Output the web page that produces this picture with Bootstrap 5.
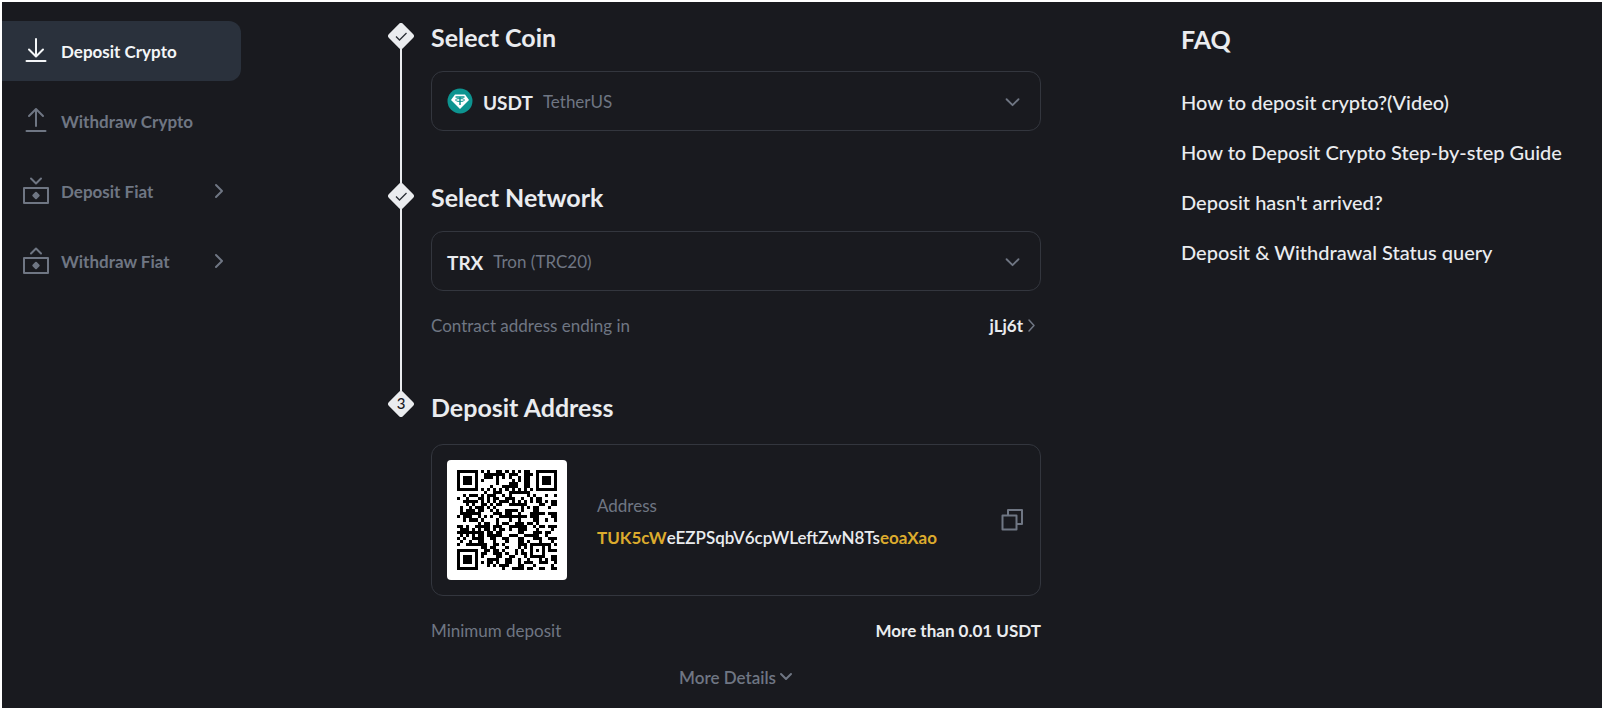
<!DOCTYPE html>
<html lang="en">
<head>
<meta charset="utf-8">
<meta name="viewport" content="width=device-width, initial-scale=1">
<title>Deposit Crypto</title>
<link href="https://cdn.jsdelivr.net/npm/bootstrap@5.3.0/dist/css/bootstrap.min.css" rel="stylesheet">
<style>
  :root { --ink: #eaecef; --muted: #6f7683; --edge: #33363e; --gold: #dcab2d; }
  body { background: #fff; padding: 2px; color: var(--ink); font: 400 17px/24px Lato, "Liberation Sans", sans-serif; }
  a { color: inherit; text-decoration: none; }
  button { color: inherit; }
  svg { display: block; flex: none; }
  .stroke { fill: none; stroke: currentColor; stroke-width: 2; stroke-linecap: round; stroke-linejoin: round; }
  .page { display: grid; grid-template-columns: 239px minmax(0, 1fr) 421px; min-height: calc(100vh - 4px); background: #191a1f; }
  .side { padding-top: 19px; gap: 10px; }
  .side a { height: 60px; padding: 0 16px 0 20px; gap: 11px; color: var(--muted); font-weight: 700; border-radius: 0 12px 12px 0; }
  .side a.current { background: #2a313c; color: #f4f6f8; }
  .side span, .picker .dim { padding-top: 2px; }
  .flow { padding: 21px 140px 0 147px; }
  .step { gap: 17px; }
  .marker { width: 26px; }
  .rail { width: 2px; background: var(--ink); }
  .step h2, .faq h2 { font-size: 25px; line-height: 28px; font-weight: 700; margin: 0 0 20px; }
  .step-coin { padding-bottom: 52px; }
  .step-net { padding-bottom: 53px; }
  .step-addr { padding-top: 2px; }
  .step-addr h2 { margin-bottom: 23px; }
  .picker { height: 60px; padding: 0 15px; border: 1px solid var(--edge); border-radius: 12px; background: none; }
  .ticker { font-size: 19px; font-weight: 700; padding-top: 4px; margin-right: 10px; }
  .coin-icon { margin-right: 10px; }
  .dim { color: var(--muted); }
  .info { margin-top: 23px; }
  .strong-text { font-weight: 700; }
  .addr-box { padding: 15px; border: 1px solid var(--edge); border-radius: 12px; }
  .qr { width: 120px; height: 120px; padding: 10px; background: #fff; border-radius: 4px; margin-right: 30px; }
  .addr-text { padding-top: 3px; }
  .addr { font-weight: 600; margin-top: 8px; overflow-wrap: anywhere; }
  .addr b { color: var(--gold); font-weight: 700; }
  .more { font-weight: 600; gap: 3px; }
  .faq { padding: 23px 20px 0 0; }
  .faq h2 { margin-bottom: 37px; }
  .faq ul { gap: 26px; font-size: 20px; font-weight: 500; }
</style>
</head>
<body>
<div class="page">
  <nav class="side d-flex flex-column" aria-label="Wallet">
    <a href="#" class="current d-flex align-items-center" aria-current="page">
      <svg class="stroke" width="28" height="28" viewBox="0 0 28 28"><path d="M14 2v17M7 12.500l7 7 7-7M4.500 24h19"/></svg>
      <span>Deposit Crypto</span></a>
    <a href="#" class="d-flex align-items-center">
      <svg class="stroke" width="28" height="28" viewBox="0 0 28 28"><path d="M14 19V2.500M7 9l7-7 7 7M4.500 24h19"/></svg>
      <span>Withdraw Crypto</span></a>
    <a href="#" class="d-flex align-items-center">
      <svg class="stroke" width="28" height="28" viewBox="0 0 28 28"><path d="M9 1.500l5 5 5-5M2 11h24v15H2z"/><path fill="currentColor" d="M14 15.800l2.700 2.700-2.700 2.700-2.700-2.700z"/></svg>
      <span class="flex-grow-1">Deposit Fiat</span>
      <svg class="stroke" width="14" height="16" viewBox="0 0 14 16"><path d="M5 2l6 6-6 6"/></svg></a>
    <a href="#" class="d-flex align-items-center">
      <svg class="stroke" width="28" height="28" viewBox="0 0 28 28"><path d="M9 6.500l5-5 5 5M2 11h24v15H2z"/><path fill="currentColor" d="M14 15.800l2.700 2.700-2.700 2.700-2.700-2.700z"/></svg>
      <span class="flex-grow-1">Withdraw Fiat</span>
      <svg class="stroke" width="14" height="16" viewBox="0 0 14 16"><path d="M5 2l6 6-6 6"/></svg></a>
  </nav>

  <main class="flow">
    <section class="d-flex align-items-stretch step">
      <div class="marker d-flex flex-column align-items-center">
        <svg width="26" height="26" viewBox="0 0 26 26"><rect x="3" y="3" width="20" height="20" rx="3" fill="#eaecef" transform="rotate(45 13 13)"/><path d="M8 13.500l3.500 3.500 7-7" fill="none" stroke="#2b2f36" stroke-width="1.300"/></svg>
        <div class="rail flex-grow-1"></div>
      </div>
      <div class="flex-grow-1 step-coin">
        <h2>Select Coin</h2>
        <button type="button" class="picker w-100 d-flex align-items-center" aria-haspopup="listbox" aria-label="Coin: USDT TetherUS">
          <svg class="coin-icon" width="26" height="26" viewBox="0 0 26 26"><circle cx="13" cy="13" r="12.500" fill="#0d9490"/><path d="M8 6.500h10l4 5.500-9 9-9-9z" fill="#fff"/><path d="M8.500 9h9M13 9v8" stroke="#0d9490" stroke-width="1.500" fill="none"/><ellipse cx="13" cy="12" rx="4.500" ry="1.500" stroke="#0d9490" fill="none"/></svg>
          <span class="ticker">USDT</span>
          <span class="dim flex-grow-1 text-start">TetherUS</span>
          <svg class="stroke dim" width="24" height="24" viewBox="0 0 24 24"><path d="M5 9l6.500 6.500L18 9"/></svg>
        </button>
      </div>
    </section>

    <section class="d-flex align-items-stretch step">
      <div class="marker d-flex flex-column align-items-center">
        <svg width="26" height="26" viewBox="0 0 26 26"><rect x="3" y="3" width="20" height="20" rx="3" fill="#eaecef" transform="rotate(45 13 13)"/><path d="M8 13.500l3.500 3.500 7-7" fill="none" stroke="#2b2f36" stroke-width="1.300"/></svg>
        <div class="rail flex-grow-1"></div>
      </div>
      <div class="flex-grow-1 step-net">
        <h2>Select Network</h2>
        <button type="button" class="picker w-100 d-flex align-items-center" aria-haspopup="listbox" aria-label="Network: TRX Tron (TRC20)">
          <span class="ticker">TRX</span>
          <span class="dim flex-grow-1 text-start">Tron (TRC20)</span>
          <svg class="stroke dim" width="24" height="24" viewBox="0 0 24 24"><path d="M5 9l6.500 6.500L18 9"/></svg>
        </button>
        <div class="info d-flex justify-content-between">
          <span class="dim">Contract address ending in</span>
          <a href="#" class="strong-text d-flex align-items-center gap-1">jLj6t
            <svg class="stroke dim" width="14" height="16" viewBox="0 0 14 16"><path stroke-width="1.500" d="M2 2l5 5.500-5 5.500"/></svg></a>
        </div>
      </div>
    </section>

    <section class="d-flex align-items-stretch step">
      <div class="marker">
        <svg width="26" height="26" viewBox="0 0 26 26"><rect x="3" y="3" width="20" height="20" rx="3" fill="#eaecef" transform="rotate(45 13 13)"/><text x="13" y="18" text-anchor="middle" font-size="15" font-weight="500" fill="#191a1f">3</text></svg>
      </div>
      <div class="flex-grow-1 step-addr">
        <h2>Deposit Address</h2>
        <div class="addr-box d-flex align-items-center">
          <svg id="qr" class="qr" viewBox="0 0 33 33" shape-rendering="crispEdges" role="img" aria-label="Deposit address QR code"></svg>
          <div class="flex-grow-1 addr-text">
            <div class="dim">Address</div>
            <div class="addr" id="address"><b>TUK5cW</b>eEZPSqbV6cpWLeftZwN8Ts<b>eoaXao</b></div>
          </div>
          <button type="button" class="btn p-0 border-0 dim" aria-label="Copy address">
            <svg class="stroke" width="24" height="24" viewBox="0 0 24 24"><path d="M1.500 7.500h14v14h-14zM7 7V2h14v14h-5"/></svg>
          </button>
        </div>
        <div class="info d-flex justify-content-between">
          <span class="dim">Minimum deposit</span>
          <span class="strong-text">More than 0.01 USDT</span>
        </div>
        <div class="info d-flex justify-content-center">
          <a href="#" class="dim more d-flex align-items-center">More Details
            <svg class="stroke" width="14" height="16" viewBox="0 0 14 16"><path d="M2 4l5 5 5-5"/></svg></a>
        </div>
      </div>
    </section>
  </main>

  <aside class="faq">
    <h2>FAQ</h2>
    <ul class="list-unstyled d-flex flex-column m-0">
      <li><a href="#">How to deposit crypto?(Video)</a></li>
      <li><a href="#">How to Deposit Crypto Step-by-step Guide</a></li>
      <li><a href="#">Deposit hasn't arrived?</a></li>
      <li><a href="#">Deposit &amp; Withdrawal Status query</a></li>
    </ul>
  </aside>
</div>
<script src="https://cdn.jsdelivr.net/npm/bootstrap@5.3.0/dist/js/bootstrap.bundle.min.js"></script>
<script>
// QR code, version 4, error correction level H (4 blocks of 9 data + 16 check bytes).
function qrMatrix(text, mask) {
  const N = 33, ND = 9, NE = 16, NB = 4, m = [], fixed = [];
  for (let i = 0; i < N; i++) { m.push(Array(N).fill(0)); fixed.push(Array(N).fill(0)); }
  const set = (x, y, v) => { if (x >= 0 && y >= 0 && x < N && y < N) { m[y][x] = v ? 1 : 0; fixed[y][x] = 1; } };
  // timing, finder and alignment patterns
  for (let i = 0; i < N; i++) { set(6, i, i % 2 === 0); set(i, 6, i % 2 === 0); }
  for (const [cx, cy] of [[3, 3], [N - 4, 3], [3, N - 4]])
    for (let y = -4; y < 5; y++) for (let x = -4; x < 5; x++) {
      const d = Math.max(Math.abs(x), Math.abs(y)); set(cx + x, cy + y, d !== 2 && d !== 4);
    }
  for (let y = -2; y < 3; y++) for (let x = -2; x < 3; x++) set(26 + x, 26 + y, Math.max(Math.abs(x), Math.abs(y)) !== 1);
  // format bits
  const d = 2 << 3 | mask; let rem = d;
  for (let i = 0; i < 10; i++) rem = (rem << 1) ^ ((rem >>> 9) * 0x537);
  const f = (d << 10 | rem) ^ 0x5412, g = i => (f >>> i) & 1;
  for (let i = 0; i < 6; i++) set(8, i, g(i));
  set(8, 7, g(6)); set(8, 8, g(7)); set(7, 8, g(8));
  for (let i = 9; i < 15; i++) set(14 - i, 8, g(i));
  for (let i = 0; i < 8; i++) set(N - 1 - i, 8, g(i));
  for (let i = 8; i < 15; i++) set(8, N - 15 + i, g(i));
  set(8, N - 8, 1);
  // data bytes
  let s = '0100' + text.length.toString(2).padStart(8, '0');
  for (const ch of text) s += ch.charCodeAt(0).toString(2).padStart(8, '0');
  s += '0000';
  const data = []; for (let i = 0; i < s.length; i += 8) data.push(parseInt(s.slice(i, i + 8), 2));
  // Reed-Solomon check bytes
  const mul = (x, y) => { let z = 0; for (let i = 7; i >= 0; i--) { z = (z << 1) ^ ((z >>> 7) * 0x11D); z ^= ((y >>> i) & 1) * x; } return z; };
  const gen = Array(NE).fill(0); gen[NE - 1] = 1;
  for (let i = 0, root = 1; i < NE; i++, root = mul(root, 2))
    for (let j = 0; j < NE; j++) { gen[j] = mul(gen[j], root); if (j + 1 < NE) gen[j] ^= gen[j + 1]; }
  const blocks = [], checks = [], out = [];
  for (let k = 0; k < NB; k++) {
    const bl = data.slice(k * ND, k * ND + ND), e = Array(NE).fill(0);
    for (const v of bl) { const t = v ^ e.shift(); e.push(0); gen.forEach((q, i) => e[i] ^= mul(q, t)); }
    blocks.push(bl); checks.push(e);
  }
  for (let i = 0; i < ND; i++) for (const q of blocks) out.push(q[i]);
  for (let i = 0; i < NE; i++) for (const q of checks) out.push(q[i]);
  // zigzag placement with the mask applied
  let i = 0;
  for (let R = N - 1; R >= 1; R -= 2) {
    if (R === 6) R = 5;
    for (let v = 0; v < N; v++) for (let j = 0; j < 2; j++) {
      const x = R - j, y = ((R + 1) & 2) === 0 ? N - 1 - v : v;
      if (fixed[y][x]) continue;
      const bit = i < out.length * 8 ? (out[i >>> 3] >>> (7 - (i & 7))) & 1 : 0; i++;
      const k = [(x + y) % 2, y % 2, x % 3, (x + y) % 3, ((x / 3 | 0) + (y / 2 | 0)) % 2, x * y % 2 + x * y % 3,
        (x * y % 2 + x * y % 3) % 2, ((x + y) % 2 + x * y % 3) % 2][mask];
      m[y][x] = bit ^ (k === 0 ? 1 : 0);
    }
  }
  return m;
}
let path = '';
qrMatrix(document.getElementById('address').textContent, 0)
  .forEach((row, y) => row.forEach((v, x) => { if (v) path += `M${x} ${y}h1v1h-1z`; }));
document.getElementById('qr').innerHTML = `<path d="${path}"/>`;
</script>
</body>
</html>
